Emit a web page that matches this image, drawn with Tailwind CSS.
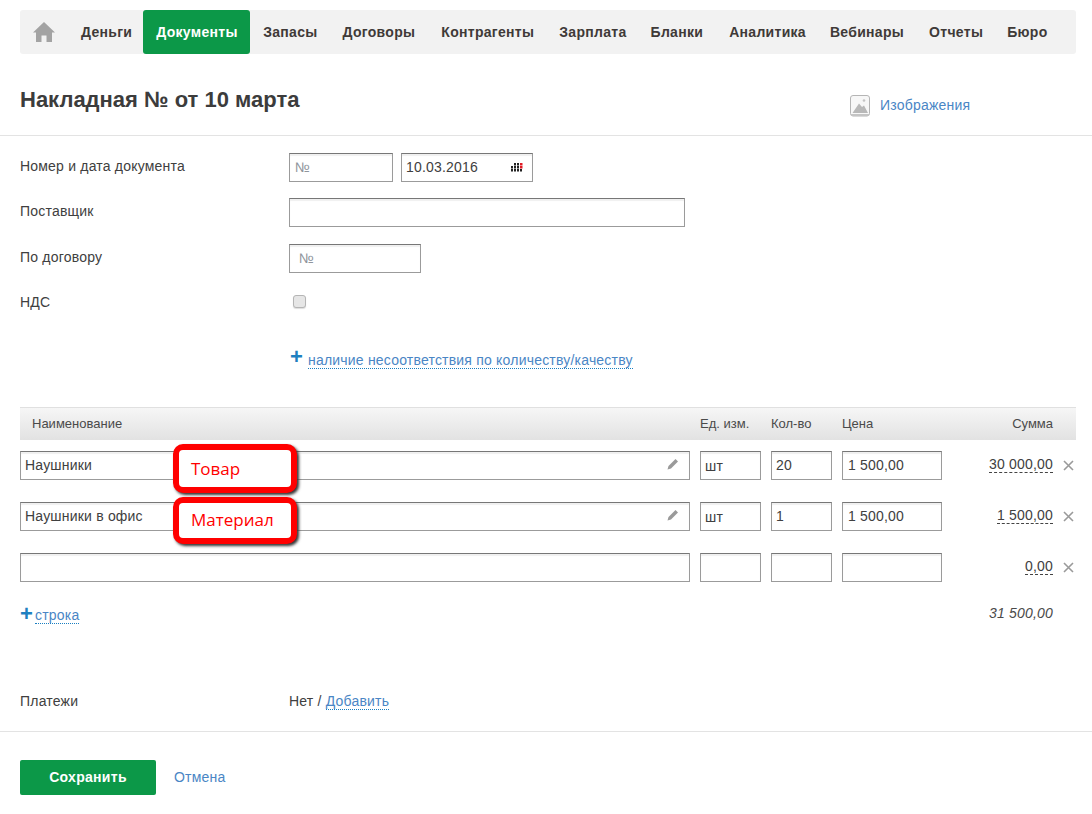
<!DOCTYPE html>
<html lang="ru">
<head>
  <meta charset="UTF-8" />
  <title>Накладная</title>
  <script src="https://cdn.jsdelivr.net/npm/@tailwindcss/browser@4"></script>
</head>
<body class="bg-white font-['Liberation_Sans',Arial,sans-serif] text-[14px] tracking-[0.2px] text-[#404040] overflow-hidden">

  <div class="relative w-[1092px] h-[814px]">
    <!-- nav -->
    <div class="pt-2.5 pl-5 pr-4">
      <nav class="flex items-stretch h-[44px] bg-[#f2f2f2] rounded-[3px] font-bold tracking-[0.3px] text-[14px] text-[#3f3a38]">
        <a class="flex items-center shrink-0 pl-[13px] w-[48px]">
          <svg width="22" height="20" viewBox="0 0 22 20"><path d="M11 0 L22 10.5 H19 V20 H13.5 V13.5 H8.5 V20 H3 V10.5 H0 Z" fill="#a3a3a3"/></svg>
        </a>
        <a class="flex items-center pl-[13px] pr-[11px]">Деньги</a>
        <a class="flex items-center pl-[13px] pr-[12px] bg-[#0c9848] text-white rounded-[3px]">Документы</a>
        <a class="flex items-center pl-[13.5px] pr-[12.5px]">Запасы</a>
        <a class="flex items-center px-[12.5px]">Договоры</a>
        <a class="flex items-center pl-[13.5px] pr-[12.5px]">Контрагенты</a>
        <a class="flex items-center px-[12.5px]">Зарплата</a>
        <a class="flex items-center pl-[11.5px] pr-[12.5px]">Бланки</a>
        <a class="flex items-center pl-[13.5px] pr-[12.5px]">Аналитика</a>
        <a class="flex items-center pl-[11.5px] pr-[12.5px]">Вебинары</a>
        <a class="flex items-center px-[12.5px]">Отчеты</a>
        <a class="flex items-center pl-[11.5px] pr-[12.5px]">Бюро</a>
      </nav>
    </div>

    <!-- title -->
    <div class="flex h-[82px] px-5 border-b border-[#e3e3e3]">
      <h1 class="w-[830px] pt-[34px] text-[22px] leading-[24px] tracking-normal font-bold text-[#3c3c3c]">Накладная № от 10 марта</h1>
      <div class="flex items-start pt-[41px] gap-[10px]">
        <svg width="20" height="22" viewBox="0 0 20 22">
          <rect x="0.5" y="0.5" width="19" height="20.5" rx="2.5" fill="#f7f7f7" stroke="#b5b5b5"/>
          <rect x="1" y="19" width="18" height="2" fill="#c4c4c4"/>
          <path d="M2.5 18 L9 8.5 L12 12 L14 10.5 L18 18 Z" fill="#b8b8b8"/>
          <circle cx="14" cy="5.5" r="1.3" fill="#c4c4c4"/>
        </svg>
        <a class="text-[#4a86c5] leading-[18px] mt-[1px]">Изображения</a>
      </div>
    </div>

    <!-- form -->
    <div class="pl-5 pr-4 pt-[17px]">
      <div class="flex h-[29px]">
        <div class="w-[269px] leading-[26px]">Номер и дата документа</div>
        <div class="w-[104px] h-[29px] px-[5px] leading-[27px] text-[#8f959c] border border-[#9b9b9b] border-t-[#777] shadow-[inset_0_2px_1px_#f0f0f0]">№</div>
        <div class="flex items-center justify-between ml-2 w-[132px] h-[29px] pl-[4px] pr-[9px] border border-[#9b9b9b] border-t-[#777] shadow-[inset_0_2px_1px_#f0f0f0]">
          10.03.2016
          <svg width="12" height="9" viewBox="0 0 12 9">
            <g fill="#222">
              <rect x="3" y="0" width="2" height="2.5"/><rect x="6" y="0" width="2" height="2.5"/><rect x="9" y="0" width="2.5" height="2.5" fill="#e01b24"/>
              <rect x="0" y="3" width="2" height="2.5"/><rect x="3" y="3" width="2" height="2.5"/><rect x="6" y="3" width="2" height="2.5"/><rect x="9" y="3" width="2.5" height="2.5" fill="#e01b24"/>
              <rect x="0" y="6" width="2" height="2.5"/><rect x="3" y="6" width="2" height="2.5"/><rect x="6" y="6" width="2" height="2.5"/><rect x="9" y="6" width="2" height="2.5"/>
            </g>
          </svg>
        </div>
      </div>

      <div class="flex h-[29px] mt-4">
        <div class="w-[269px] leading-[26px]">Поставщик</div>
        <div class="w-[396px] h-[29px] border border-[#9b9b9b] border-t-[#777] shadow-[inset_0_2px_1px_#f0f0f0]"></div>
      </div>

      <div class="flex h-[29px] mt-[17px]">
        <div class="w-[269px] leading-[26px]">По договору</div>
        <div class="w-[132px] h-[29px] px-[9px] leading-[27px] text-[#8f959c] border border-[#9b9b9b] border-t-[#777] shadow-[inset_0_2px_1px_#f0f0f0]">№</div>
      </div>

      <div class="flex h-[29px] mt-[16px]">
        <div class="w-[269px] leading-[26px]">НДС</div>
        <div class="ml-1 mt-[6px] w-[13px] h-[13px] rounded-[3px] border border-[#b5b5b5] bg-[#e6e6e6] shadow-[0_1px_1px_#ddd]"></div>
      </div>

      <div class="flex items-center h-[20px] mt-[31px] ml-[270px]">
        <span class="text-[#1f80c0] text-[22px] font-bold leading-[20px] w-[18px] -mt-[4px]">+</span>
        <a class="text-[#4a86c5] leading-[16px] mt-[2px] border-b border-dotted border-[#1a7fc1]">наличие несоответствия по количеству/качеству</a>
      </div>

      <!-- table -->
      <div class="flex items-center h-[33px] mt-[38px] bg-gradient-to-b from-[#f6f6f6] to-[#e2e2e2] border-t border-[#e0e0e0] text-[13px] tracking-normal text-[#4a4a4a]">
        <div class="w-[680px] pl-3">Наименование</div>
        <div class="w-[71px]">Ед. изм.</div>
        <div class="w-[71px]">Кол-во</div>
        <div class="w-[100px]">Цена</div>
        <div class="w-[111px] text-right">Сумма</div>
      </div>

      <div class="flex h-[29px] mt-[11px]">
        <div class="flex items-center justify-between w-[670px] h-[29px] pl-[4px] pr-[10px] border border-[#9b9b9b] border-t-[#777] shadow-[inset_0_2px_1px_#f0f0f0]">
          <span class="-mt-[1px]">Наушники</span>
          <svg width="12" height="12" viewBox="0 0 12 12" class="-mt-[3px]"><path d="M0.5 11.5 L1.5 8 L8.5 1 L11 3.5 L4 10.5 Z" fill="#9a9a9a"/></svg>
        </div>
        <div class="ml-2.5 w-[61px] h-[29px] px-[4px] leading-[29px] border border-[#9b9b9b] border-t-[#777] shadow-[inset_0_2px_1px_#f0f0f0]">шт</div>
        <div class="ml-2.5 w-[61px] h-[29px] px-[4px] leading-[27px] border border-[#9b9b9b] border-t-[#777] shadow-[inset_0_2px_1px_#f0f0f0]">20</div>
        <div class="ml-2.5 w-[100px] h-[29px] px-[5px] leading-[27px] border border-[#9b9b9b] border-t-[#777] shadow-[inset_0_2px_1px_#f0f0f0]">1 500,00</div>
        <div class="w-[111px] text-right"><span class="inline-block leading-[15px] mt-[6px] border-b border-dashed border-[#444]">30 000,00</span></div>
        <svg width="11" height="11" viewBox="0 0 11 11" class="ml-[10px] mt-[9px]"><path d="M1 1 L10 10 M10 1 L1 10" stroke="#9a9a9a" stroke-width="1.6"/></svg>
      </div>

      <div class="flex h-[29px] mt-[22px]">
        <div class="flex items-center justify-between w-[670px] h-[29px] pl-[4px] pr-[10px] border border-[#9b9b9b] border-t-[#777] shadow-[inset_0_2px_1px_#f0f0f0]">
          <span class="-mt-[1px]">Наушники в офис</span>
          <svg width="12" height="12" viewBox="0 0 12 12" class="-mt-[3px]"><path d="M0.5 11.5 L1.5 8 L8.5 1 L11 3.5 L4 10.5 Z" fill="#9a9a9a"/></svg>
        </div>
        <div class="ml-2.5 w-[61px] h-[29px] px-[4px] leading-[29px] border border-[#9b9b9b] border-t-[#777] shadow-[inset_0_2px_1px_#f0f0f0]">шт</div>
        <div class="ml-2.5 w-[61px] h-[29px] px-[4px] leading-[27px] border border-[#9b9b9b] border-t-[#777] shadow-[inset_0_2px_1px_#f0f0f0]">1</div>
        <div class="ml-2.5 w-[100px] h-[29px] px-[5px] leading-[27px] border border-[#9b9b9b] border-t-[#777] shadow-[inset_0_2px_1px_#f0f0f0]">1 500,00</div>
        <div class="w-[111px] text-right"><span class="inline-block leading-[15px] mt-[6px] border-b border-dashed border-[#444]">1 500,00</span></div>
        <svg width="11" height="11" viewBox="0 0 11 11" class="ml-[10px] mt-[9px]"><path d="M1 1 L10 10 M10 1 L1 10" stroke="#9a9a9a" stroke-width="1.6"/></svg>
      </div>

      <div class="flex h-[29px] mt-[22px]">
        <div class="w-[670px] h-[29px] border border-[#9b9b9b] border-t-[#777] shadow-[inset_0_2px_1px_#f0f0f0]"></div>
        <div class="ml-2.5 w-[61px] h-[29px] border border-[#9b9b9b] border-t-[#777] shadow-[inset_0_2px_1px_#f0f0f0]"></div>
        <div class="ml-2.5 w-[61px] h-[29px] border border-[#9b9b9b] border-t-[#777] shadow-[inset_0_2px_1px_#f0f0f0]"></div>
        <div class="ml-2.5 w-[100px] h-[29px] border border-[#9b9b9b] border-t-[#777] shadow-[inset_0_2px_1px_#f0f0f0]"></div>
        <div class="w-[111px] text-right"><span class="inline-block leading-[15px] mt-[6px] border-b border-dashed border-[#444]">0,00</span></div>
        <svg width="11" height="11" viewBox="0 0 11 11" class="ml-[10px] mt-[9px]"><path d="M1 1 L10 10 M10 1 L1 10" stroke="#9a9a9a" stroke-width="1.6"/></svg>
      </div>

      <div class="flex justify-between h-[20px] mt-[23px] pr-[23px]">
        <div class="flex items-center">
          <span class="text-[#1f80c0] text-[22px] font-bold leading-[20px] w-[15px] -mt-[3px]">+</span>
          <a class="text-[#4a86c5] leading-[16px] border-b border-dotted border-[#1a7fc1]">строка</a>
        </div>
        <div class="italic text-[#4a4a4a] leading-[17px]">31 500,00</div>
      </div>

      <div class="flex mt-[66px] h-[20px] leading-[20px]">
        <div class="w-[269px]">Платежи</div>
        <div>Нет / <a class="text-[#4a86c5] inline-block leading-[16px] border-b border-dotted border-[#1a7fc1]">Добавить</a></div>
      </div>
    </div>

    <!-- footer -->
    <div class="mt-5 border-t border-[#e3e3e3] px-5 pt-7 flex items-center">
      <button class="w-[136px] h-[35px] bg-[#0c9848] text-white font-bold rounded-[2px] tracking-[0.3px]">Сохранить</button>
      <a class="ml-[18px] text-[#4a86c5]">Отмена</a>
    </div>

    <!-- annotations -->
    <div class="absolute left-[173px] top-[444px] w-[124px] h-[49px] pl-[12px] pt-[7px] border-[6px] border-[#ff0000] rounded-[10px] bg-white text-[#f00] text-[17px] tracking-normal leading-[24px] font-['Open_Sans',sans-serif] shadow-[2px_2px_3px_#333]">Товар</div>
    <div class="absolute left-[173px] top-[497px] w-[124px] h-[47px] pl-[12px] pt-[5px] border-[6px] border-[#ff0000] rounded-[10px] bg-white text-[#f00] text-[17px] tracking-normal leading-[24px] font-['Open_Sans',sans-serif] shadow-[2px_2px_3px_#333]">Материал</div>
  </div>

</body>
</html>
